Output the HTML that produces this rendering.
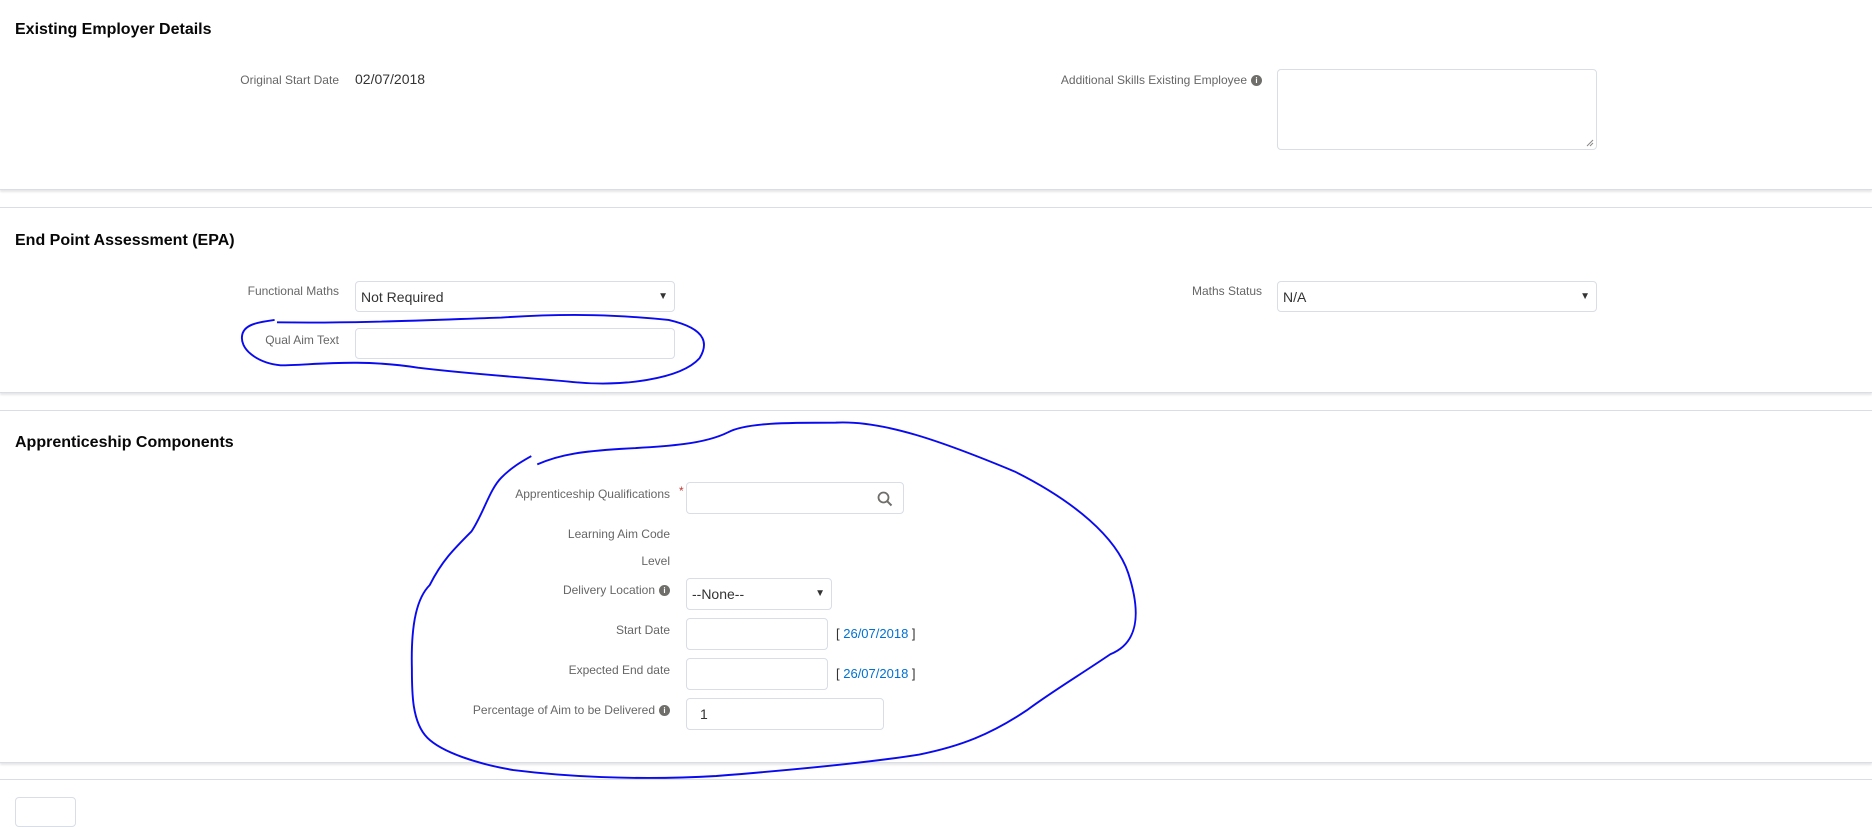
<!DOCTYPE html>
<html><head><meta charset="utf-8"><style>
*{box-sizing:border-box}
body{margin:0;width:1872px;height:808px;overflow:hidden;background:#fff;font-family:"Liberation Sans",Arial,sans-serif;position:relative}
.a{position:absolute}
.sec{position:absolute;left:0;width:1872px;border-top:1px solid #d8dde6;border-bottom:1px solid #d8dde6;box-shadow:0 2px 2px rgba(0,0,0,.1);background:#fff}
.h{position:absolute;left:15px;font-size:16px;font-weight:bold;color:#080707}
.lb{position:absolute;font-size:12px;color:#666;text-align:right}
.in{position:absolute;border:1px solid #d8dde6;border-radius:4px;background:#fff;font-size:14px;color:#333;padding-left:5px;line-height:30px}
.ar{position:absolute;right:6px;top:0;font-size:10px;color:#333}
.i{display:inline-block;width:11px;height:11px;border-radius:50%;background:#706e6b;color:#fff;font-size:8px;line-height:11px;text-align:center;font-weight:bold;vertical-align:1px;margin-left:4px}
.lk{position:absolute;font-size:13px;color:#333}
.lk span{color:#0070d2}
</style></head><body>
<div class="sec" style="top:-2px;height:192px"></div>
<div class="h" style="top:21px">Existing Employer Details</div>
<div class="lb" style="right:1533px;top:73px">Original Start Date</div>
<div class="a" style="left:355px;top:71px;font-size:14px;color:#333">02/07/2018</div>
<div class="lb" style="right:610px;top:73px">Additional Skills Existing Employee<span class="i">i</span></div>
<div class="in" style="left:1277px;top:69px;width:320px;height:81px"><svg class="a" style="right:2px;bottom:2px" width="8" height="8"><path d="M1 7L7 1M4 7L7 4" stroke="#888"/></svg></div>

<div class="sec" style="top:207px;height:186px"></div>
<div class="h" style="top:232px">End Point Assessment (EPA)</div>
<div class="lb" style="right:1533px;top:284px">Functional Maths</div>
<div class="in" style="left:355px;top:281px;width:320px;height:31px">Not Required<span class="ar">▼</span></div>
<div class="lb" style="right:610px;top:284px">Maths Status</div>
<div class="in" style="left:1277px;top:281px;width:320px;height:31px">N/A<span class="ar">▼</span></div>
<div class="lb" style="right:1533px;top:333px">Qual Aim Text</div>
<div class="in" style="left:355px;top:328px;width:320px;height:31px"></div>

<div class="sec" style="top:410px;height:353px"></div>
<div class="h" style="top:434px">Apprenticeship Components</div>
<div class="lb" style="right:1202px;top:487px">Apprenticeship Qualifications</div>
<div class="a" style="left:679px;top:484px;color:#c23934;font-size:12px">*</div>
<div class="in" style="left:686px;top:482px;width:218px;height:32px"><svg class="a" style="right:10px;top:8px" width="16" height="16"><circle cx="6.5" cy="6.5" r="5" fill="none" stroke="#706e6b" stroke-width="1.8"/><path d="M10 10L14.5 14.5" stroke="#706e6b" stroke-width="2"/></svg></div>
<div class="lb" style="right:1202px;top:527px">Learning Aim Code</div>
<div class="lb" style="right:1202px;top:554px">Level</div>
<div class="lb" style="right:1202px;top:583px">Delivery Location<span class="i">i</span></div>
<div class="in" style="left:686px;top:578px;width:146px;height:32px">--None--<span class="ar">▼</span></div>
<div class="lb" style="right:1202px;top:623px">Start Date</div>
<div class="in" style="left:686px;top:618px;width:142px;height:32px"></div>
<div class="lk" style="left:836px;top:626px">[ <span>26/07/2018</span> ]</div>
<div class="lb" style="right:1202px;top:663px">Expected End date</div>
<div class="in" style="left:686px;top:658px;width:142px;height:32px"></div>
<div class="lk" style="left:836px;top:666px">[ <span>26/07/2018</span> ]</div>
<div class="lb" style="right:1202px;top:703px">Percentage of Aim to be Delivered<span class="i">i</span></div>
<div class="in" style="left:686px;top:698px;width:198px;height:32px;padding-left:13px">1</div>

<div class="sec" style="top:779px;height:40px;box-shadow:none;border-bottom:none"></div>
<div class="a" style="left:15px;top:797px;width:61px;height:30px;border:1px solid #d8dde6;border-radius:4px"></div>

<svg class="a" style="left:0;top:0" width="1872" height="808" viewBox="0 0 1568 676.8" preserveAspectRatio="none">
<path d="M232 270 C300 271 360 268 420 266 C480 262 520 264 560 268 C595 276 592 290 586 300 C570 318 520 324 480 320 C440 316 400 314 350 308 C300 300 260 306 235 306 C215 304 200 292 203 280 C205 272 215 270 230 268" fill="none" stroke="#0a0af0" stroke-width="1.6"/>
<path d="M450 389 C470 380 490 378 520 376 C560 374 590 372 610 362 C625 354 660 354 700 354 C740 352 790 370 850 395 C900 420 935 450 945 480 C958 520 950 540 930 548 C905 565 880 580 860 595 C830 615 805 625 770 632 C720 640 650 646 600 650 C530 654 470 650 430 645 C400 640 370 630 358 618 C345 605 345 580 345 560 C344 520 350 500 360 490 C370 470 380 460 395 445 C405 430 410 410 420 400 C430 390 440 385 445 382" fill="none" stroke="#0a0af0" stroke-width="1.6"/>
</svg>
</body></html>
